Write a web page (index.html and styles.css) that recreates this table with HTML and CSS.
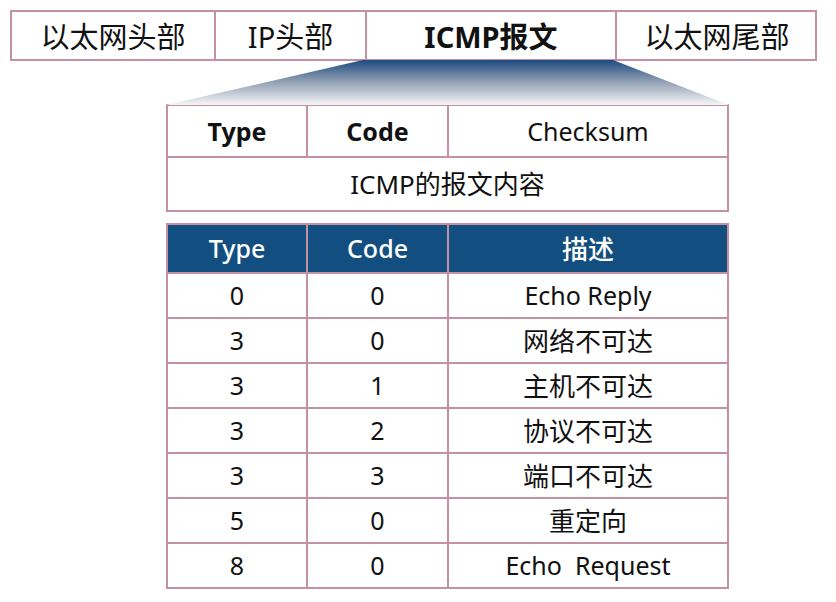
FILE: index.html
```html
<!DOCTYPE html>
<html lang="zh">
<head>
<meta charset="utf-8">
<link rel="stylesheet" href="styles.css">
</head>
<body>
<div class="frame">
  <div class="bar">
    <div class="seg seg-eth">以太网头部</div>
    <div class="seg seg-ip">IP头部</div>
    <div class="seg seg-icmp">ICMP报文</div>
    <div class="seg seg-tail">以太网尾部</div>
  </div>
  <svg class="zoom" width="836" height="45" viewBox="0 0 836 45">
    <defs>
      <linearGradient id="g" x1="0" y1="0" x2="0" y2="1">
        <stop offset="0" stop-color="#1d4a80"/>
        <stop offset="0.45" stop-color="#8a9ab0"/>
        <stop offset="1" stop-color="#f6f6f7"/>
      </linearGradient>
    </defs>
    <polygon points="363,0 613,0 729,45 166,45" fill="url(#g)"/>
  </svg>
  <table class="fmt">
    <tr class="r1">
      <td class="c-type b">Type</td>
      <td class="c-code b">Code</td>
      <td class="c-desc">Checksum</td>
    </tr>
    <tr class="r2">
      <td colspan="3" class="zh">ICMP的报文内容</td>
    </tr>
  </table>
  <table class="codes">
    <tr class="head">
      <th class="c-type">Type</th>
      <th class="c-code">Code</th>
      <th class="c-desc zh">描述</th>
    </tr>
    <tr><td>0</td><td>0</td><td>Echo Reply</td></tr>
    <tr><td>3</td><td>0</td><td class="zh">网络不可达</td></tr>
    <tr><td>3</td><td>1</td><td class="zh">主机不可达</td></tr>
    <tr><td>3</td><td>2</td><td class="zh">协议不可达</td></tr>
    <tr><td>3</td><td>3</td><td class="zh">端口不可达</td></tr>
    <tr><td>5</td><td>0</td><td class="zh">重定向</td></tr>
    <tr><td>8</td><td>0</td><td>Echo&nbsp; Request</td></tr>
  </table>
</div>
</body>
</html>
```

FILE: styles.css
```css
html, body {
  margin: 0;
  padding: 0;
  background: #ffffff;
}
body {
  font-family: "Noto Sans", "Noto Sans CJK SC", sans-serif;
  color: #111111;
}
.frame {
  width: 836px;
  height: 602px;
  padding-top: 10px;
  box-sizing: border-box;
}
.bar {
  display: grid;
  grid-template-columns: 202px 151px 250px 202px;
  margin-left: 10px;
  width: 807px;
  height: 51px;
  border: 2px solid #c391a2;
  box-sizing: border-box;
}
.seg {
  display: flex;
  align-items: center;
  justify-content: center;
  font-size: 29px;
  border-left: 2px solid #c391a2;
  line-height: 1;
  padding-top: 1px;
}
.seg-eth { border-left: none; }
.seg-icmp { font-weight: 700; }
.zoom {
  display: block;
  margin-top: -1px;
}
table {
  border-collapse: collapse;
  margin-left: 166px;
  width: 563px;
  table-layout: fixed;
}
td, th {
  border: 2px solid #c391a2;
  text-align: center;
  padding: 0;
  font-size: 25px;
  line-height: 1;
}
.zh { font-size: 26px; }
.c-type { width: 138px; }
.c-code { width: 139px; }
.b { font-weight: 700; }
.fmt .r1 { height: 52px; }
.fmt .r2 { height: 54px; }
.fmt { margin-top: -1px; }
.codes { margin-top: 11px; }
.codes .head { height: 49px; }
.codes th {
  background: #134e80;
  color: #ffffff;
  font-weight: 500;
}
.codes tr { height: 45px; }
```
